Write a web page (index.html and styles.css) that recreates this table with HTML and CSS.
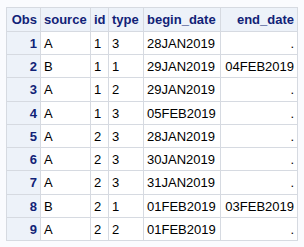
FILE: index.html
```html
<!DOCTYPE html>
<html>
<head>
<meta charset="utf-8">
<link rel="stylesheet" href="styles.css">
</head>
<body>
<table class="out">
<colgroup>
<col class="c-obs"><col class="c-src"><col class="c-id"><col class="c-type"><col class="c-beg"><col class="c-end">
</colgroup>
<thead>
<tr class="hrow"><th class="r">Obs</th><th>source</th><th>id</th><th>type</th><th>begin_date</th><th class="r">end_date</th></tr>
</thead>
<tbody>
<tr><th class="r">1</th><td>A</td><td>1</td><td>3</td><td>28JAN2019</td><td class="r">.</td></tr>
<tr><th class="r">2</th><td>B</td><td>1</td><td>1</td><td>29JAN2019</td><td class="r">04FEB2019</td></tr>
<tr class="tall"><th class="r">3</th><td>A</td><td>1</td><td>2</td><td>29JAN2019</td><td class="r">.</td></tr>
<tr><th class="r">4</th><td>A</td><td>1</td><td>3</td><td>05FEB2019</td><td class="r">.</td></tr>
<tr><th class="r">5</th><td>A</td><td>2</td><td>3</td><td>28JAN2019</td><td class="r">.</td></tr>
<tr><th class="r">6</th><td>A</td><td>2</td><td>3</td><td>30JAN2019</td><td class="r">.</td></tr>
<tr class="tall"><th class="r">7</th><td>A</td><td>2</td><td>3</td><td>31JAN2019</td><td class="r">.</td></tr>
<tr><th class="r">8</th><td>B</td><td>2</td><td>1</td><td>01FEB2019</td><td class="r">03FEB2019</td></tr>
<tr><th class="r">9</th><td>A</td><td>2</td><td>2</td><td>01FEB2019</td><td class="r">.</td></tr>
</tbody>
</table>
</body>
</html>
```

FILE: styles.css
```css
html, body {
  margin: 0;
  padding: 0;
  background: #fafbfe;
}
body {
  padding: 7px 0 0 6px;
  font-family: "Liberation Sans", Arial, sans-serif;
  font-size: 13px;
}
.out {
  border-collapse: collapse;
  table-layout: fixed;
  width: 291px;
  background: #ffffff;
  border: 1px solid #c9ced6;
}
.c-obs { width: 34px; }
.c-src { width: 50px; }
.c-id { width: 18px; }
.c-type { width: 35px; }
.c-beg { width: 77px; }
.c-end { width: 77px; }
th, td {
  border: 1px solid #d6dae1;
  padding: 0 3px;
  height: 22px;
  vertical-align: middle;
  text-align: left;
  white-space: nowrap;
  overflow: hidden;
  color: #000000;
  font-weight: normal;
}
.hrow th {
  height: 23px;
}
th {
  background: #edf2f9;
  color: #112277;
  font-weight: bold;
}
.tall th, .tall td {
  height: 23px;
}
.r {
  text-align: right;
}
```
